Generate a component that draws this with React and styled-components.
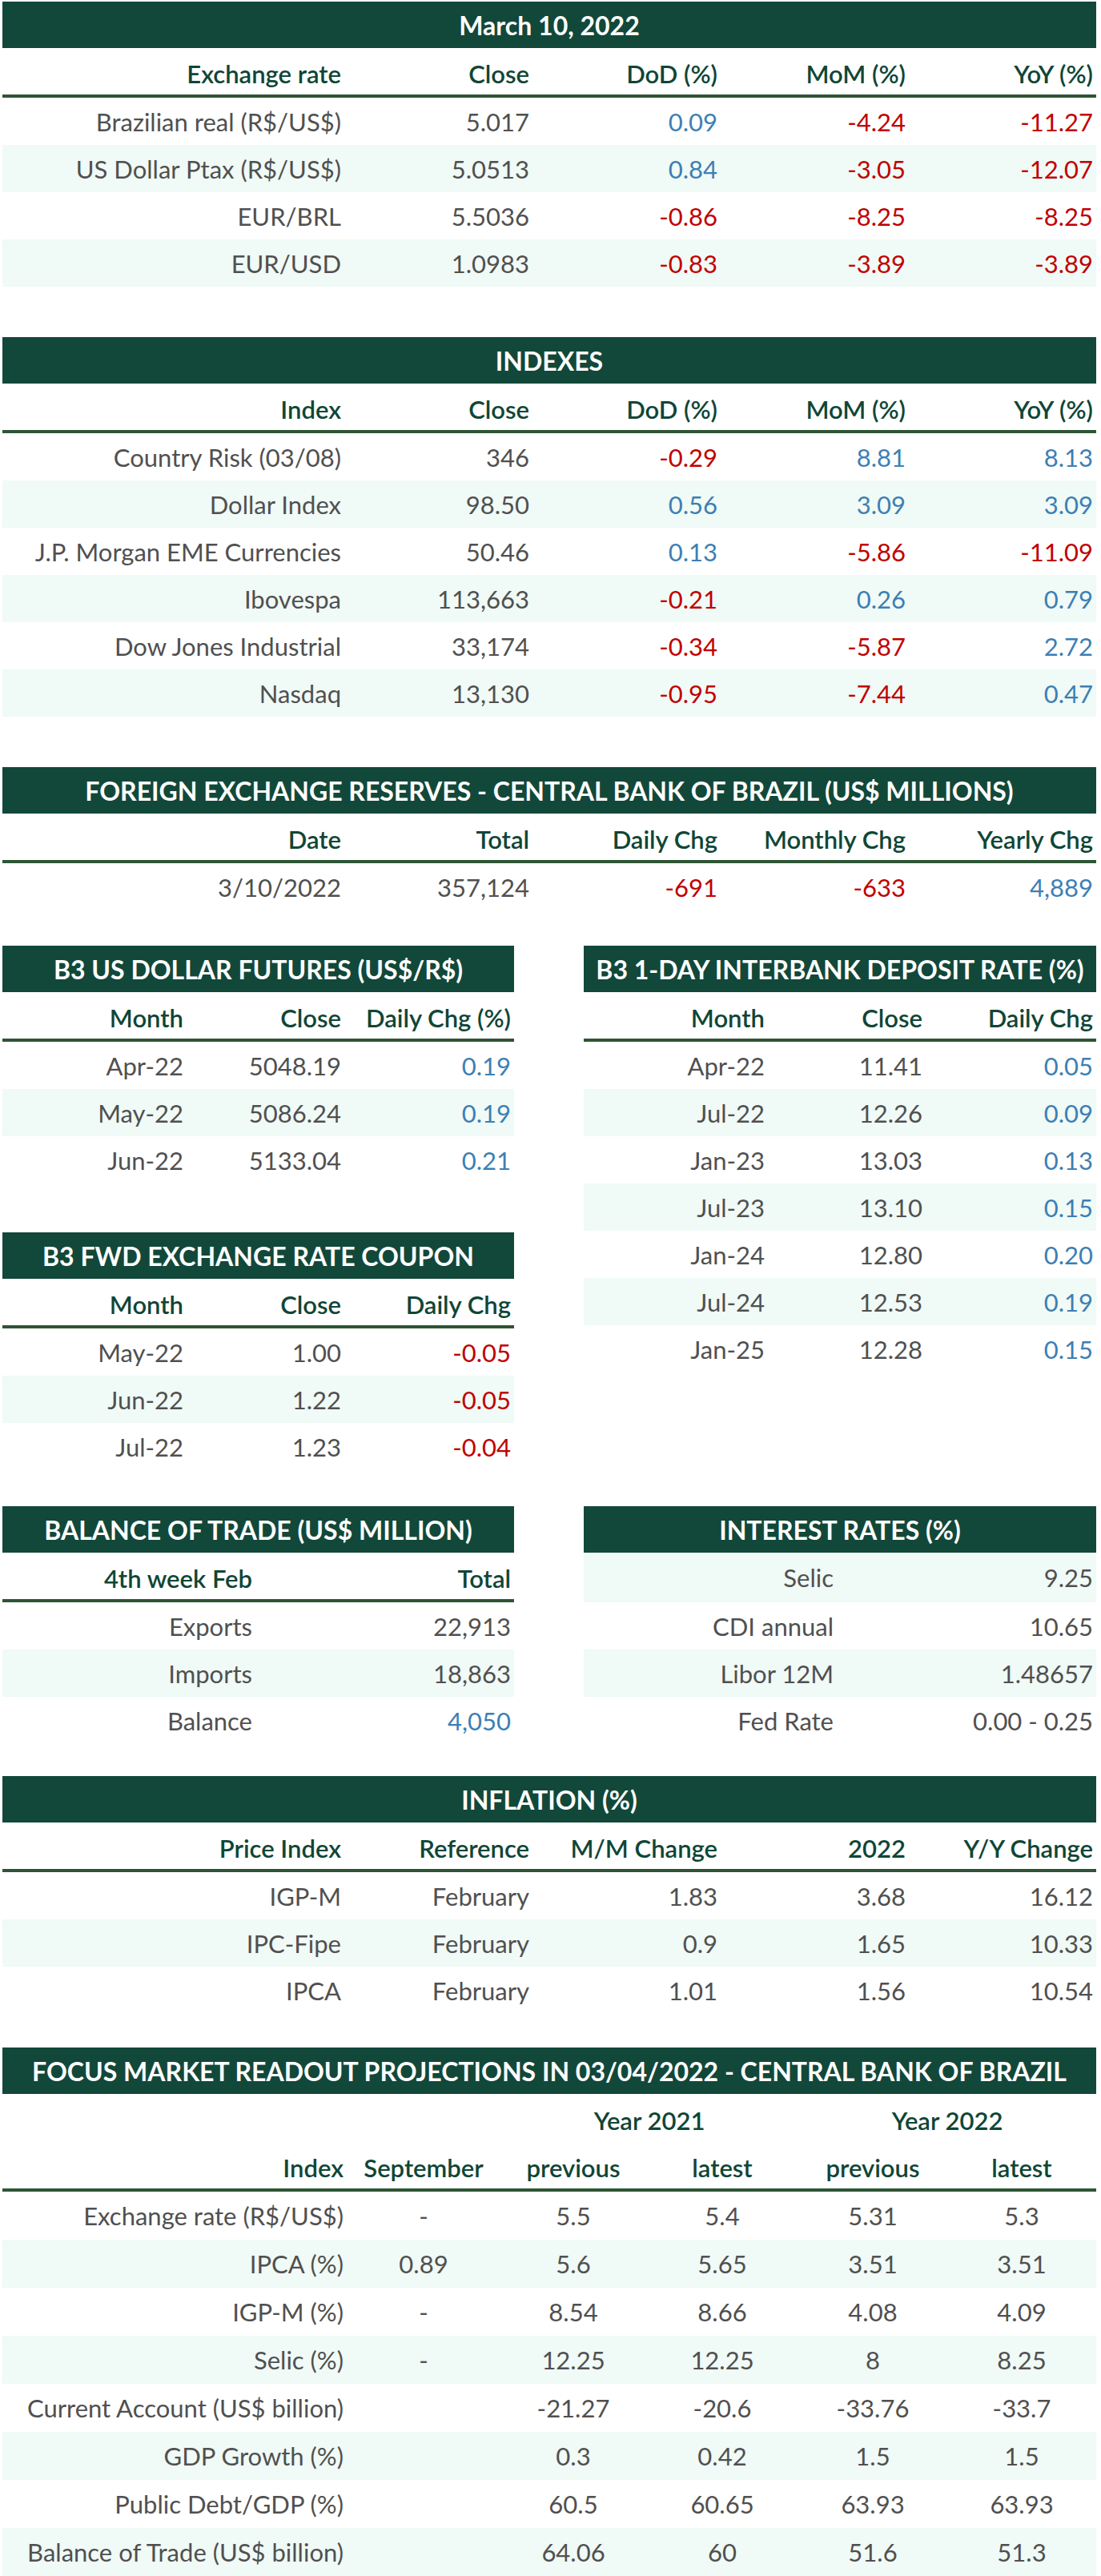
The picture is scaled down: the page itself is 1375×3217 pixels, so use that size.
import React from "react";
import styled, { createGlobalStyle } from "styled-components";

const GlobalStyle = createGlobalStyle`
  *, *::before, *::after {
    box-sizing: border-box;
  }
  body {
    margin: 0;
    background: #ffffff;
    font-family: "Lato", "Noto Sans", sans-serif;
  }
`;

const GREEN = "#12483a";
const RULE = "#2e5535";
const SHADE = "#f0faf6";
const INK = "#505050";
const HEAD_INK = "#0f4636";
const BLUE = "#3d7fb4";
const RED = "#c00000";

const Page = styled.div`
  width: 1369px;
  padding: 2px 0 0 3px;
  display: flex;
  flex-direction: column;
`;

const Section = styled.section`
  margin-top: ${({ $gap }) => $gap || 0}px;
  width: ${({ $width }) => ($width ? `${$width}px` : "auto")};
`;

const Columns = styled.div`
  display: flex;
  gap: 87px;
  align-items: flex-start;
  margin-top: ${({ $gap }) => $gap || 0}px;
`;

const Stack = styled.div`
  display: flex;
  flex-direction: column;
`;

const TitleBar = styled.div`
  height: 58px;
  background: ${GREEN};
  color: #ffffff;
  display: flex;
  align-items: center;
  justify-content: center;
  font-weight: 700;
  font-size: 32px;
  white-space: nowrap;
  overflow: hidden;
`;

const Line = styled.div`
  display: grid;
  grid-template-columns: ${({ $cols }) => $cols};
  align-items: center;
  height: ${({ $h }) => $h || 59}px;
  background: ${({ $shade }) => ($shade ? SHADE : "transparent")};
  border-bottom: ${({ $rule }) => ($rule ? `4px solid ${RULE}` : "none")};
`;

const Cell = styled.div`
  grid-column: span ${({ $span }) => $span || 1};
  display: flex;
  justify-content: ${({ $align }) => ($align === "center" ? "center" : "flex-end")};
  padding: 0 4px;
  white-space: nowrap;
  font-size: 31px;
  color: ${({ $tone }) => $tone || INK};
`;

const HeadCell = styled(Cell)`
  color: ${HEAD_INK};
  font-weight: 600;
  padding-top: 6px;
`;

const toneOf = (value) => (String(value).startsWith("-") ? RED : BLUE);

const DataTable = ({
  title,
  cols,
  head,
  rows,
  signed = [],
  align = [],
  shadeFirst,
  preHead,
  firstHeight,
  rowHeight = 59
}) => (
  <>
    <TitleBar>{title}</TitleBar>
    {preHead && (
      <Line $cols={cols} $h={60}>
        {preHead.map(([text, span], i) => (
          <HeadCell key={i} $span={span} $align="center">
            {text}
          </HeadCell>
        ))}
      </Line>
    )}
    {head && (
      <Line $cols={cols} $h={62} $rule>
        {head.map((text, i) => (
          <HeadCell key={i} $align={align[i]}>
            {text}
          </HeadCell>
        ))}
      </Line>
    )}
    {rows.map((row, r) => (
      <Line
        key={r}
        $cols={cols}
        $shade={shadeFirst ? r % 2 === 0 : r % 2 === 1}
        $h={r === 0 && firstHeight ? firstHeight : rowHeight}
      >
        {row.map((value, i) => (
          <Cell key={i} $align={align[i]} $tone={signed.includes(i) ? toneOf(value) : undefined}>
            {value}
          </Cell>
        ))}
      </Line>
    ))}
  </>
);

const FIVE = "427px 235px 235px 235px 234px";
const HALF3 = "230px 197px 1fr";
const HALF2 = "316px 1fr";
const FOCUS = "430px 192px 182px 190px 186px 186px";

const exchange = {
  title: "March 10, 2022",
  cols: FIVE,
  head: ["Exchange rate", "Close", "DoD (%)", "MoM (%)", "YoY (%)"],
  signed: [2, 3, 4],
  rows: [
    ["Brazilian real (R$/US$)", "5.017", "0.09", "-4.24", "-11.27"],
    ["US Dollar Ptax (R$/US$)", "5.0513", "0.84", "-3.05", "-12.07"],
    ["EUR/BRL", "5.5036", "-0.86", "-8.25", "-8.25"],
    ["EUR/USD", "1.0983", "-0.83", "-3.89", "-3.89"]
  ]
};

const indexes = {
  title: "INDEXES",
  cols: FIVE,
  head: ["Index", "Close", "DoD (%)", "MoM (%)", "YoY (%)"],
  signed: [2, 3, 4],
  rows: [
    ["Country Risk (03/08)", "346", "-0.29", "8.81", "8.13"],
    ["Dollar Index", "98.50", "0.56", "3.09", "3.09"],
    ["J.P. Morgan EME Currencies", "50.46", "0.13", "-5.86", "-11.09"],
    ["Ibovespa", "113,663", "-0.21", "0.26", "0.79"],
    ["Dow Jones Industrial", "33,174", "-0.34", "-5.87", "2.72"],
    ["Nasdaq", "13,130", "-0.95", "-7.44", "0.47"]
  ]
};

const reserves = {
  title: "FOREIGN EXCHANGE RESERVES - CENTRAL BANK OF BRAZIL (US$ MILLIONS)",
  cols: FIVE,
  head: ["Date", "Total", "Daily Chg", "Monthly Chg", "Yearly Chg"],
  signed: [2, 3, 4],
  rows: [["3/10/2022", "357,124", "-691", "-633", "4,889"]]
};

const futures = {
  title: "B3 US DOLLAR FUTURES (US$/R$)",
  cols: HALF3,
  head: ["Month", "Close", "Daily Chg (%)"],
  signed: [2],
  rows: [
    ["Apr-22", "5048.19", "0.19"],
    ["May-22", "5086.24", "0.19"],
    ["Jun-22", "5133.04", "0.21"]
  ]
};

const coupon = {
  title: "B3 FWD EXCHANGE RATE COUPON",
  cols: HALF3,
  head: ["Month", "Close", "Daily Chg"],
  signed: [2],
  rows: [
    ["May-22", "1.00", "-0.05"],
    ["Jun-22", "1.22", "-0.05"],
    ["Jul-22", "1.23", "-0.04"]
  ]
};

const interbank = {
  title: "B3 1-DAY INTERBANK DEPOSIT RATE (%)",
  cols: HALF3,
  head: ["Month", "Close", "Daily Chg"],
  signed: [2],
  rows: [
    ["Apr-22", "11.41", "0.05"],
    ["Jul-22", "12.26", "0.09"],
    ["Jan-23", "13.03", "0.13"],
    ["Jul-23", "13.10", "0.15"],
    ["Jan-24", "12.80", "0.20"],
    ["Jul-24", "12.53", "0.19"],
    ["Jan-25", "12.28", "0.15"]
  ]
};

const trade = {
  title: "BALANCE OF TRADE (US$ MILLION)",
  cols: HALF2,
  head: ["4th week Feb", "Total"],
  signed: [],
  rows: [
    ["Exports", "22,913"],
    ["Imports", "18,863"],
    ["Balance", <span style={{ color: BLUE }}>4,050</span>]
  ]
};

const rates = {
  title: "INTEREST RATES (%)",
  cols: HALF2,
  shadeFirst: true,
  firstHeight: 62,
  rows: [
    ["Selic", "9.25"],
    ["CDI annual", "10.65"],
    ["Libor 12M", "1.48657"],
    ["Fed Rate", "0.00 - 0.25"]
  ]
};

const inflation = {
  title: "INFLATION (%)",
  cols: FIVE,
  head: ["Price Index", "Reference", "M/M Change", "2022", "Y/Y Change"],
  rows: [
    ["IGP-M", "February", "1.83", "3.68", "16.12"],
    ["IPC-Fipe", "February", "0.9", "1.65", "10.33"],
    ["IPCA", "February", "1.01", "1.56", "10.54"]
  ]
};

const centered = ["right", "center", "center", "center", "center", "center"];

const focus = {
  title: "FOCUS MARKET READOUT PROJECTIONS IN 03/04/2022 - CENTRAL BANK OF BRAZIL",
  cols: FOCUS,
  align: centered,
  rowHeight: 60,
  preHead: [
    ["", 2],
    ["Year 2021", 2],
    ["Year 2022", 2]
  ],
  head: ["Index", "September", "previous", "latest", "previous", "latest"],
  rows: [
    ["Exchange rate (R$/US$)", "-", "5.5", "5.4", "5.31", "5.3"],
    ["IPCA (%)", "0.89", "5.6", "5.65", "3.51", "3.51"],
    ["IGP-M (%)", "-", "8.54", "8.66", "4.08", "4.09"],
    ["Selic (%)", "-", "12.25", "12.25", "8", "8.25"],
    ["Current Account (US$ billion)", "", "-21.27", "-20.6", "-33.76", "-33.7"],
    ["GDP Growth (%)", "", "0.3", "0.42", "1.5", "1.5"],
    ["Public Debt/GDP (%)", "", "60.5", "60.65", "63.93", "63.93"],
    ["Balance of Trade (US$ billion)", "", "64.06", "60", "51.6", "51.3"]
  ]
};

const App = () => (
  <>
    <GlobalStyle />
    <Page>
      <Section>
        <DataTable {...exchange} />
      </Section>
      <Section $gap={63}>
        <DataTable {...indexes} />
      </Section>
      <Section $gap={63}>
        <DataTable {...reserves} />
      </Section>
      <Columns $gap={44}>
        <Stack>
          <Section $width={639}>
            <DataTable {...futures} />
          </Section>
          <Section $width={639} $gap={61}>
            <DataTable {...coupon} />
          </Section>
        </Stack>
        <Section $width={640}>
          <DataTable {...interbank} />
        </Section>
      </Columns>
      <Columns $gap={45}>
        <Section $width={639}>
          <DataTable {...trade} />
        </Section>
        <Section $width={640}>
          <DataTable {...rates} />
        </Section>
      </Columns>
      <Section $gap={40}>
        <DataTable {...inflation} />
      </Section>
      <Section $gap={42}>
        <DataTable {...focus} />
      </Section>
    </Page>
  </>
);

export default App;
